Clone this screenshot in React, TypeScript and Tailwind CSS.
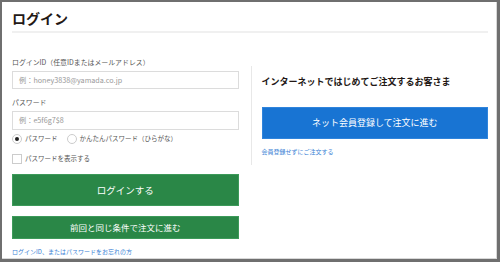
import React from "react";

const font = { fontFamily: '"Noto Sans CJK JP", "Noto Sans", sans-serif' };

export default function App() {
  return (
    <div className="w-[500px] h-[262px] bg-[#6f6f6f] pt-[2px] pl-[2px] pr-[3px] pb-[3px]" style={font}>
      <div className="h-full bg-white pl-[10px] pr-[8px] border-r border-b border-[#d8d8d8] flex flex-col">
        <div className="h-[29px] flex items-center pt-[2px]">
          <h1 className="text-[14px] leading-[16px] font-bold text-[#231815]">ログイン</h1>
        </div>
        <div className="h-[2px] bg-[#f0f0f0]" />
        <div className="flex items-start">
          {/* left column */}
          <div className="w-[227px] flex flex-col pt-[24px]">
            <div className="text-[6.9px] leading-[11px] text-[#555]">ログインID（任意IDまたはメールアドレス）</div>
            <div className="mt-[3px] h-[18px] border border-[#dcdcdc] flex items-center pl-[6px] text-[7.2px] text-[#999]">
              例：honey3838@yamada.co.jp
            </div>
            <div className="mt-[8px] text-[6.9px] leading-[11px] text-[#555]">パスワード</div>
            <div className="mt-[3px] h-[19px] border border-[#dcdcdc] flex items-center pl-[6px] text-[7.2px] text-[#999]">
              例：e5f6g7$8
            </div>
            <div className="mt-[4px] h-[10px] flex items-center text-[6.5px] text-[#555]">
              <span className="w-[10px] h-[10px] rounded-full border border-[#ccc] flex items-center justify-center">
                <span className="w-[4px] h-[4px] rounded-full bg-[#222]" />
              </span>
              <span className="ml-[3px]">パスワード</span>
              <span className="ml-[9px] w-[10px] h-[10px] rounded-full border border-[#ccc]" />
              <span className="ml-[3px]">かんたんパスワード（ひらがな）</span>
            </div>
            <div className="mt-[10px] h-[10px] flex items-center text-[6.5px] text-[#555]">
              <span className="w-[10px] h-[10px] border border-[#ccc]" />
              <span className="ml-[3px]">パスワードを表示する</span>
            </div>
            <button className="mt-[10px] h-[32px] bg-[#2a8747] border border-[#3d9a5a] text-white text-[9.5px] flex items-center justify-center">
              ログインする
            </button>
            <button className="mt-[10px] h-[23px] bg-[#2a8747] border border-[#3d9a5a] text-white text-[8.5px] flex items-center justify-center">
              前回と同じ条件で注文に進む
            </button>
            <a className="mt-[8px] text-[6px] leading-[10px] text-[#3a7fd5]">ログインID、またはパスワードをお忘れの方</a>
          </div>
          {/* right column */}
          <div className="ml-[12px] mt-[33px] h-[99px] border-l border-[#e8e8e8] pl-[10px] w-[238px] flex flex-col">
            <div className="mt-[10px] text-[9px] leading-[12px] font-bold text-[#231815]">インターネットではじめてご注文するお客さま</div>
            <button className="mt-[19px] h-[32px] bg-[#1874d3] border border-[#2f84dc] text-white text-[9px] flex items-center justify-center">
              ネット会員登録して注文に進む
            </button>
            <a className="mt-[8px] text-[6px] leading-[10px] text-[#3a7fd5]">会員登録せずにご注文する</a>
          </div>
        </div>
      </div>
    </div>
  );
}
